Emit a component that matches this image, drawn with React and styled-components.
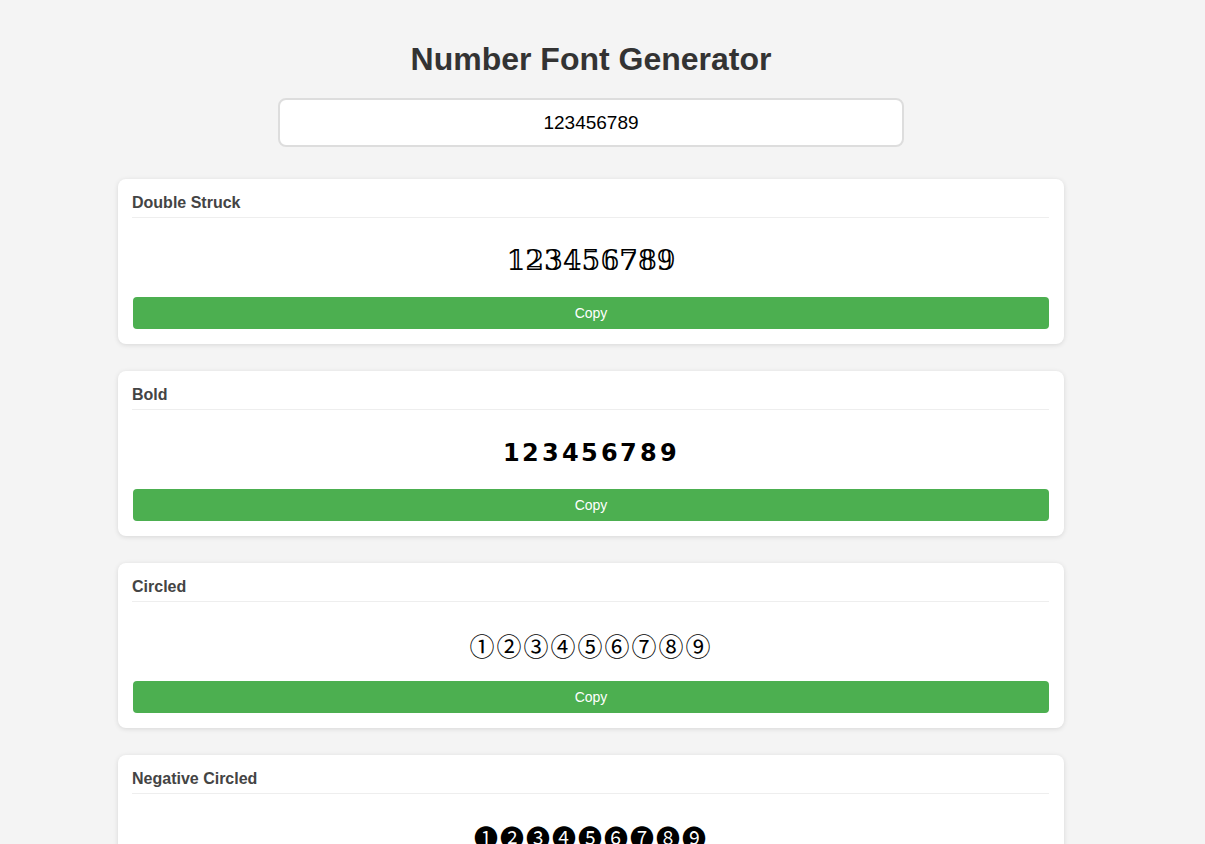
import React, { useState } from 'react'
import styled, { createGlobalStyle } from 'styled-components'

const GlobalStyle = createGlobalStyle`
  html, body {
    margin: 0;
    padding: 0;
    background: #f4f4f4;
    font-family: "Liberation Sans", Arial, sans-serif;
  }
`

const Page = styled.div`
  width: 1182px;
  padding: 20px 0 40px;
  display: flex;
  flex-direction: column;
  align-items: center;
`

const Title = styled.h1`
  margin: 21px 0 20px;
  font-size: 32px;
  font-weight: bold;
  color: #333;
  line-height: 37px;
`

const Input = styled.input`
  box-sizing: border-box;
  width: 626px;
  height: 49px;
  padding: 12px;
  margin-bottom: 32px;
  border: 2px solid #ddd;
  border-radius: 8px;
  background: #fff;
  font-family: "Liberation Sans", Arial, sans-serif;
  font-size: 19px;
  color: #000;
  text-align: center;
  outline: none;
`

const List = styled.div`
  width: 946px;
  display: flex;
  flex-direction: column;
  gap: 27px;
`

const Card = styled.div`
  box-sizing: border-box;
  background: #fff;
  border-radius: 8px;
  padding: 15px;
  box-shadow: 0 1px 5px rgba(0, 0, 0, 0.12);
`

const Label = styled.div`
  font-size: 16px;
  line-height: 18px;
  font-weight: bold;
  color: #444;
  margin-left: -1px;
  padding-bottom: 5px;
  border-bottom: 1px solid #eee;
`

const Output = styled.div`
  margin: 25px 0 18px;
  height: 36px;
  line-height: 36px;
  text-align: center;
  font-size: ${p => p.$size}px;
  letter-spacing: ${p => p.$spacing || 0}px;
  color: #000;
  font-family: ${p => p.$family};
  white-space: nowrap;
`

const CopyButton = styled.button`
  display: block;
  width: 100%;
  height: 32px;
  border: none;
  border-radius: 4px;
  background: #4caf50;
  color: #fff;
  font-family: "Liberation Sans", Arial, sans-serif;
  font-size: 14px;
  cursor: pointer;
`

const map = (offset) => (s) =>
  [...s].map(c => (c >= '0' && c <= '9' ? String.fromCodePoint(offset + (c.charCodeAt(0) - 48)) : c)).join('')

const circled = (s) =>
  [...s].map(c => (c >= '1' && c <= '9' ? String.fromCodePoint(0x2460 + c.charCodeAt(0) - 49) : c === '0' ? '⓪' : c)).join('')

const negCircled = (s) =>
  [...s].map(c => (c >= '1' && c <= '9' ? String.fromCodePoint(0x2776 + c.charCodeAt(0) - 49) : c === '0' ? '⓿' : c)).join('')

const styles = [
  { name: 'Double Struck', fn: map(0x1d7d8), size: 27, family: '"DejaVu Serif", "DejaVu Sans", serif' },
  { name: 'Bold', fn: map(0x1d7ec), size: 24, spacing: 2.6, family: '"DejaVu Sans", "Noto Sans", sans-serif' },
  { name: 'Circled', fn: circled, size: 25, spacing: 2, family: '"Noto Sans CJK JP", "DejaVu Sans", sans-serif' },
  { name: 'Negative Circled', fn: negCircled, size: 24, spacing: 2, family: '"Noto Sans CJK JP", "DejaVu Sans", sans-serif' },
  { name: 'Monospace', fn: map(0x1d7f6), size: 24, family: '"DejaVu Sans Mono", monospace' },
  { name: 'Full Width', fn: map(0xff10), size: 24, family: '"Noto Sans CJK SC", sans-serif' },
]

export default function App() {
  const [text, setText] = useState('123456789')
  return (
    <>
      <GlobalStyle />
      <Page>
        <Title>Number Font Generator</Title>
        <Input value={text} onChange={e => setText(e.target.value)} />
        <List>
          {styles.map(s => (
            <Card key={s.name}>
              <Label>{s.name}</Label>
              <Output $family={s.family} $size={s.size} $spacing={s.spacing}>{s.fn(text)}</Output>
              <CopyButton onClick={() => navigator.clipboard?.writeText(s.fn(text))}>Copy</CopyButton>
            </Card>
          ))}
        </List>
      </Page>
    </>
  )
}
